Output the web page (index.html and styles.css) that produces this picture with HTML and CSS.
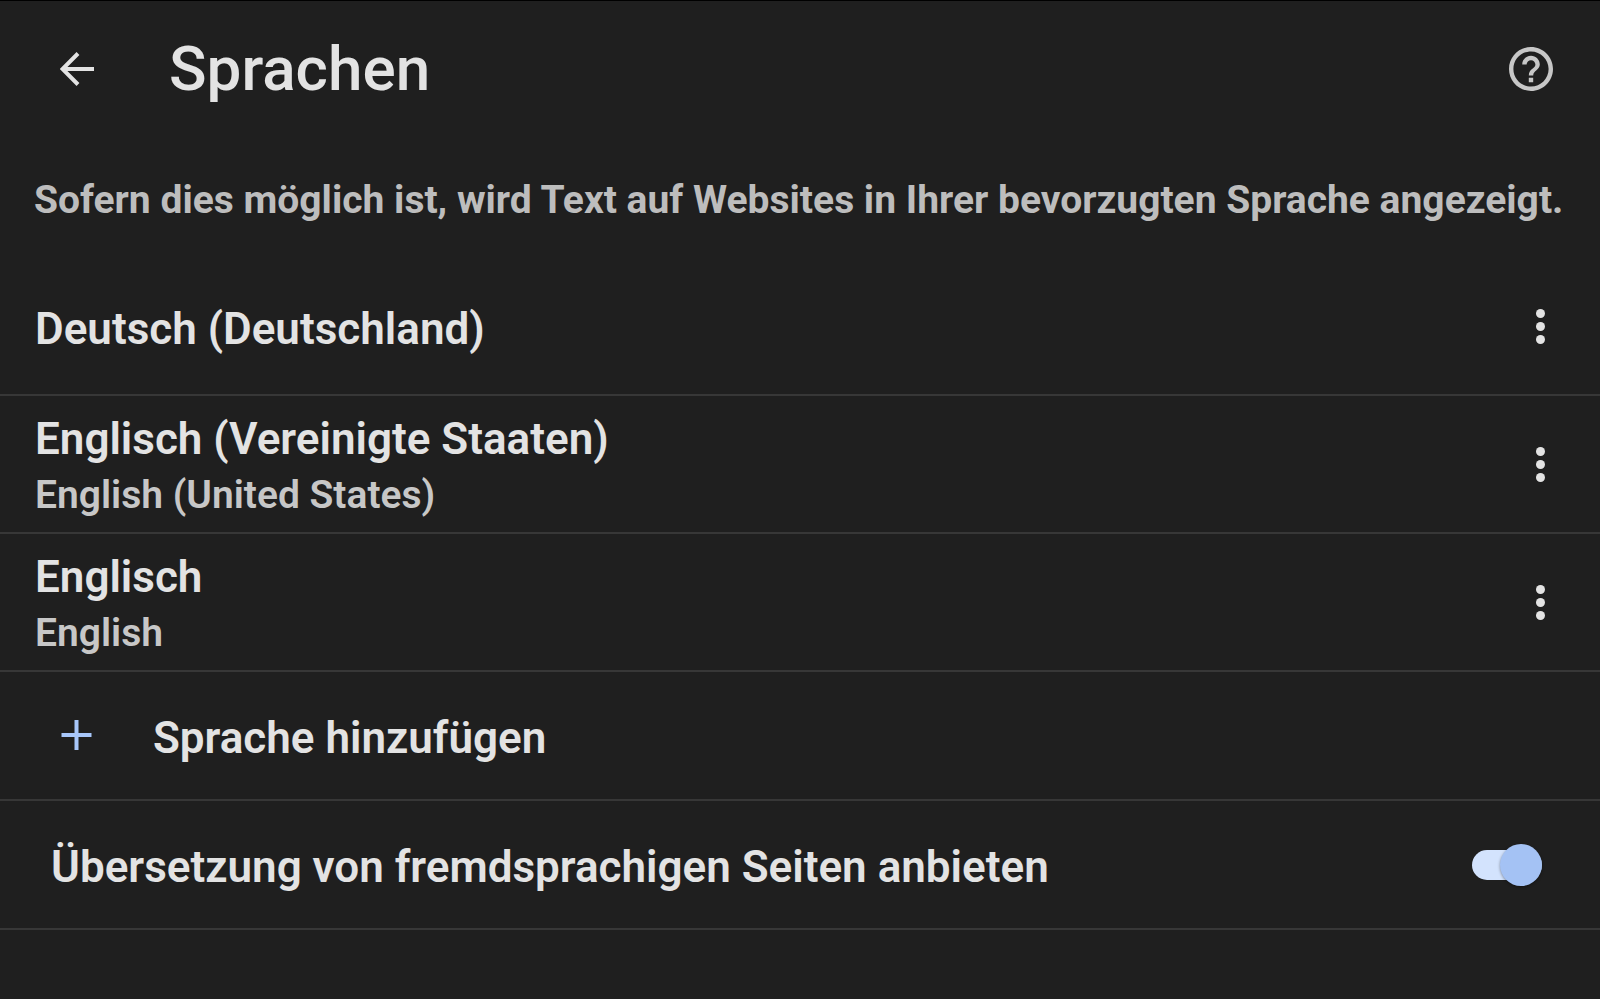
FILE: index.html
```html
<!DOCTYPE html>
<html lang="de">
<head>
<meta charset="utf-8">
<meta name="viewport" content="width=device-width, initial-scale=1">
<title>Sprachen</title>
<link rel="stylesheet" href="styles.css">
</head>
<body>
<header class="toolbar">
  <button class="icon-button" type="button" aria-label="Zurück">
    <svg class="icon-back" viewBox="0 0 34 34"><path d="M34 17H3M18 1.500L2.500 17L18 32.500"/></svg>
  </button>
  <h1 class="title">Sprachen</h1>
  <button class="icon-button" type="button" aria-label="Hilfe">
    <svg class="icon-help" viewBox="2 2 20 20"><path d="M11 18h2v-2h-2v2zm1-16C6.480 2 2 6.480 2 12s4.480 10 10 10 10-4.480 10-10S17.520 2 12 2zm0 18c-4.410 0-8-3.590-8-8s3.590-8 8-8 8 3.590 8 8-3.590 8-8 8zm0-14c-2.210 0-4 1.790-4 4h2c0-1.100.9-2 2-2s2 .9 2 2c0 2-3 1.750-3 5h2c0-2.250 3-2.500 3-5 0-2.210-1.790-4-4-4z"/></svg>
  </button>
</header>
<main>
  <p class="intro">Sofern dies möglich ist, wird Text auf Websites in Ihrer bevorzugten Sprache angezeigt.</p>
  <ul class="languages">
    <li class="row">
      <div class="names"><span class="name">Deutsch (Deutschland)</span></div>
      <button class="icon-button" type="button" aria-label="Optionen für Deutsch (Deutschland)"><svg class="icon-more" viewBox="0 0 10 36"><circle cx="5.500" cy="5.500" r="4.500"/><circle cx="5.500" cy="18.500" r="4.500"/><circle cx="5.500" cy="31.500" r="4.500"/></svg></button>
    </li>
    <li class="row">
      <div class="names"><span class="name">Englisch (Vereinigte Staaten)</span><span class="native" lang="en">English (United States)</span></div>
      <button class="icon-button" type="button" aria-label="Optionen für Englisch (Vereinigte Staaten)"><svg class="icon-more" viewBox="0 0 10 36"><circle cx="5.500" cy="5.500" r="4.500"/><circle cx="5.500" cy="18.500" r="4.500"/><circle cx="5.500" cy="31.500" r="4.500"/></svg></button>
    </li>
    <li class="row">
      <div class="names"><span class="name">Englisch</span><span class="native" lang="en">English</span></div>
      <button class="icon-button" type="button" aria-label="Optionen für Englisch"><svg class="icon-more" viewBox="0 0 10 36"><circle cx="5.500" cy="5.500" r="4.500"/><circle cx="5.500" cy="18.500" r="4.500"/><circle cx="5.500" cy="31.500" r="4.500"/></svg></button>
    </li>
  </ul>
  <button class="add" type="button">
    <svg class="icon-add" viewBox="0 0 32 32"><path d="M16.500 0V30M1.500 15H31.500"/></svg>
    <span class="label">Sprache hinzufügen</span>
  </button>
  <label class="translate">
    <span class="label">Übersetzung von fremdsprachigen Seiten anbieten</span>
    <input class="switch" type="checkbox" role="switch" checked>
  </label>
</main>
</body>
</html>
```
FILE: styles.css
```css
* {
  box-sizing: border-box;
}

body {
  margin: 0;
  min-height: 100vh;
  border-top: 1px solid #000;
  background: #1f1f1f;
  color: #e3e3e3;
  font: 600 44px/56px Roboto, sans-serif;
}

button {
  padding: 0;
  border: 0;
  background: none;
  color: inherit;
  font: inherit;
  cursor: pointer;
}

svg {
  display: block;
  fill: none;
}

.toolbar {
  display: flex;
  align-items: center;
  height: 136px;
  padding: 0 37px 0 45px;
}

.icon-button {
  display: grid;
  flex: none;
  place-items: center;
  width: 64px;
  height: 64px;
}

.icon-back {
  width: 34px;
  height: 34px;
  stroke: #e3e3e3;
  stroke-width: 4;
}

.title {
  flex: 1;
  margin: 0 0 0 60px;
  font: 500 62px/80px Roboto, sans-serif;
}

.icon-help {
  width: 44px;
  height: 44px;
  fill: #c7c7c7;
}

.intro {
  margin: 0;
  padding: 35px 32px 30px 34px;
  color: #bdbdbd;
  font-size: 39px;
  font-weight: 700;
}

.languages {
  margin: 0;
  padding: 0;
  list-style: none;
}

.row {
  display: flex;
  align-items: center;
  justify-content: space-between;
  min-height: 138px;
  padding: 0 28px 0 35px;
  border-bottom: 2px solid #373737;
}

.names {
  display: flex;
  flex-direction: column;
  padding-top: 6px;
}

.native {
  color: #c7c7c7;
  font-size: 39px;
}

.icon-more {
  width: 10px;
  height: 36px;
  fill: #e3e3e3;
}

.add {
  display: flex;
  align-items: center;
  gap: 61px;
  width: 100%;
  height: 129px;
  padding: 0 60px;
  border-bottom: 2px solid #373737;
}

.label {
  padding-top: 4px;
}

.icon-add {
  width: 32px;
  height: 32px;
  stroke: #a8c7fa;
  stroke-width: 4;
}

.translate {
  display: flex;
  align-items: center;
  justify-content: space-between;
  height: 129px;
  padding: 0 58px 0 51px;
  border-bottom: 2px solid #373737;
}

.switch {
  position: relative;
  flex: none;
  width: 70px;
  height: 30px;
  margin: 0;
  border-radius: 15px;
  background: #d3e3fd;
  appearance: none;
  cursor: pointer;
}

.switch::before {
  position: absolute;
  top: -6px;
  right: 0;
  width: 42px;
  height: 42px;
  border-radius: 50%;
  background: #a4c2f4;
  box-shadow: 0 1px 3px #00000066;
  content: "";
}
```
